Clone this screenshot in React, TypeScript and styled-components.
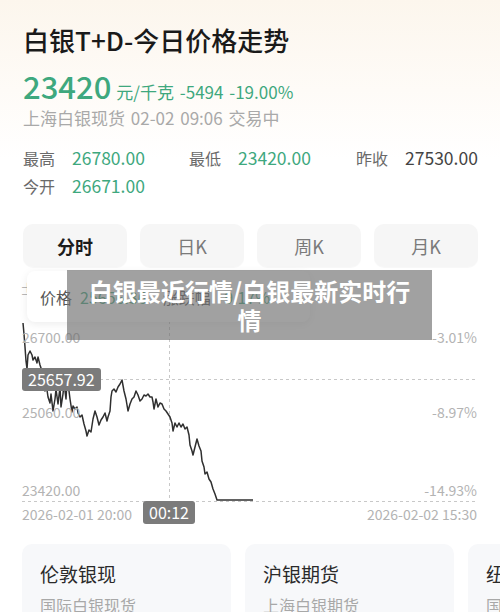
import styled, { createGlobalStyle } from "styled-components";

const GlobalStyle = createGlobalStyle`
  html, body {
    margin: 0;
    padding: 0;
    background: #ffffff;
  }
  body {
    font-family: "Noto Sans CJK SC", "Noto Sans", sans-serif;
    color: #1f1f1f;
    width: 500px;
    overflow: hidden;
  }
`;

const GREEN = "#3ea87e";

const Page = styled.div`
  position: relative;
  width: 500px;
  height: 612px;
  overflow: hidden;
  background: linear-gradient(180deg, #fcf6ed 0px, #fefbf7 90px, #ffffff 160px);
`;

const Header = styled.div`
  padding: 22px 23px 0 23px;
`;

const Title = styled.h1`
  margin: 0;
  font-size: 26px;
  line-height: 36px;
  font-weight: 500;
  color: #1a1a1a;
`;

const PriceRow = styled.div`
  display: flex;
  align-items: baseline;
  gap: 5px;
  margin-top: 8px;
  height: 40px;
  color: ${GREEN};
`;

const BigPrice = styled.span`
  font-size: 31px;
  line-height: 40px;
  font-weight: 500;
`;

const PriceMeta = styled.span`
  font-size: 17px;
  line-height: 40px;
  word-spacing: 2px;
`;

const SubLine = styled.div`
  font-size: 17px;
  line-height: 24px;
  word-spacing: 2px;
  color: #a9a9a9;
`;

const Stats = styled.div`
  display: grid;
  grid-template-columns: 166px 167px auto;
  margin-top: 14px;
`;

const Stat = styled.div`
  display: flex;
  align-items: baseline;
  gap: 17px;
  line-height: 27px;
  white-space: nowrap;
`;

const StatLabel = styled.span`
  font-size: 16px;
  color: #6a6a6a;
`;

const StatValue = styled.span<{ $muted?: boolean }>`
  font-size: 17.5px;
  color: ${(p) => (p.$muted ? "#444444" : GREEN)};
`;

const Tabs = styled.div`
  display: grid;
  grid-template-columns: repeat(4, 1fr);
  gap: 13px;
  padding: 0 22px 0 23px;
  margin-top: 24px;
`;

const Tab = styled.div<{ $active?: boolean }>`
  height: 43px;
  display: flex;
  align-items: center;
  justify-content: center;
  border-radius: 10px;
  background: #f6f6f6;
  box-shadow: 0 1px 1px rgba(0, 0, 0, 0.03);
  font-size: 18px;
  font-weight: ${(p) => (p.$active ? 700 : 400)};
  color: ${(p) => (p.$active ? "#1c1c1c" : "#7a7a7a")};
`;

const Chart = styled.div`
  position: relative;
  height: 270px;
`;

const ChartSvg = styled.svg`
  display: block;
  width: 500px;
  height: 270px;
`;

const AxisLabel = styled.span<{ $top: number; $right?: boolean }>`
  position: absolute;
  top: ${(p) => p.$top}px;
  ${(p) => (p.$right ? "right: 23px;" : "left: 22px;")}
  font-size: 14px;
  line-height: 18px;
  color: #b3b3b3;
  white-space: nowrap;
`;

const Marker = styled.span<{ $top: number; $left: number }>`
  position: absolute;
  top: ${(p) => p.$top}px;
  left: ${(p) => p.$left}px;
  padding: 0 6px;
  height: 23px;
  line-height: 23px;
  border-radius: 3px;
  background: #7b7b7b;
  color: #ffffff;
  font-size: 16px;
  white-space: nowrap;
`;

const Glyph = styled.span`
  position: absolute;
  top: 11px;
  left: 20px;
  font-size: 15px;
  color: #b8b8b8;
`;

const TooltipCard = styled.div`
  position: absolute;
  top: 4px;
  left: 27px;
  width: 283px;
  height: 51px;
  display: flex;
  align-items: center;
  gap: 16px;
  padding: 0 13px;
  box-sizing: border-box;
  background: #ffffff;
  border-radius: 8px;
  box-shadow: 0 2px 8px rgba(0, 0, 0, 0.08);
  font-size: 16px;
`;

const TipItem = styled.span`
  display: flex;
  gap: 8px;
  color: #555555;
`;

const TipValue = styled.span`
  color: ${GREEN};
`;

const Banner = styled.div`
  position: absolute;
  top: 270px;
  left: 67px;
  width: 365px;
  height: 70px;
  padding: 0 12px;
  box-sizing: border-box;
  display: flex;
  align-items: center;
  justify-content: center;
  text-align: center;
  background: rgba(112, 112, 112, 0.66);
  color: #ffffff;
  font-size: 24px;
  line-height: 29px;
  font-weight: 700;
`;

const Cards = styled.div`
  display: flex;
  gap: 14px;
  padding-left: 22px;
  margin-top: 7px;
  overflow: hidden;
`;

const Card = styled.div`
  flex: 0 0 209px;
  height: 90px;
  box-sizing: border-box;
  padding: 16px 18px;
  border-radius: 10px;
  background: #f7f8fa;
`;

const CardTitle = styled.div`
  font-size: 19px;
  line-height: 28px;
  color: #2a2a2a;
`;

const CardSub = styled.div`
  margin-top: 5px;
  font-size: 16px;
  line-height: 24px;
  color: #a8a8a8;
`;

// price line, page coordinates (svg viewBox starts at y=268)
const points: [number, number][] = [
  [23, 324], [24, 335], [25, 348], [26, 362], [27, 370], [28, 356], [30, 352], [32, 356],
  [33, 361], [35, 358], [37, 364], [38, 358], [40, 366], [42, 372], [43, 385], [45, 392],
  [46, 384], [48, 398], [50, 404], [51, 395], [53, 412], [55, 400], [56, 390], [58, 405],
  [60, 388], [61, 408], [63, 395], [64, 384], [66, 400], [67, 383], [69, 392], [70, 400],
  [72, 413], [73, 407], [75, 410], [77, 408], [78, 414], [80, 418], [82, 416], [84, 425],
  [86, 432], [87, 437], [89, 431], [91, 433], [93, 420], [95, 412], [97, 418], [99, 426],
  [101, 421], [103, 418], [105, 414], [107, 422], [108, 418], [110, 412], [111, 398],
  [112, 392], [114, 390], [116, 393], [118, 388], [120, 385], [122, 381], [124, 392],
  [126, 400], [128, 412], [130, 405], [132, 400], [134, 398], [136, 392], [138, 396],
  [140, 402], [142, 400], [144, 396], [146, 397], [148, 395], [150, 398], [152, 398],
  [153, 403], [154, 410], [156, 400], [158, 408], [160, 404], [162, 405], [164, 410],
  [166, 412], [168, 415], [170, 418], [172, 424], [173, 432], [175, 424], [177, 428],
  [179, 424], [181, 428], [183, 425], [185, 430], [187, 428], [189, 436], [190, 446],
  [192, 452], [193, 456], [195, 448], [197, 440], [199, 447], [201, 452], [202, 462],
  [204, 468], [205, 475], [207, 473], [209, 480], [211, 483], [213, 490], [215, 495],
  [217, 501], [253, 501],
];

const stats = [
  { label: "最高", value: "26780.00" },
  { label: "最低", value: "23420.00" },
  { label: "昨收", value: "27530.00", muted: true },
  { label: "今开", value: "26671.00" },
];

const tabs = ["分时", "日K", "周K", "月K"];

const cards = [
  { title: "伦敦银现", sub: "国际白银现货" },
  { title: "沪银期货", sub: "上海白银期货" },
  { title: "纽约银期", sub: "国际白银期货" },
];

export default function App() {
  const line = points.map(([x, y]) => `${x},${y}`).join(" ");
  return (
    <>
      <GlobalStyle />
      <Page>
        <Header>
          <Title>白银T+D-今日价格走势</Title>
          <PriceRow>
            <BigPrice>23420</BigPrice>
            <PriceMeta>元/千克 -5494 -19.00%</PriceMeta>
          </PriceRow>
          <SubLine>上海白银现货 02-02 09:06 交易中</SubLine>
          <Stats>
            {stats.map((s) => (
              <Stat key={s.label}>
                <StatLabel>{s.label}</StatLabel>
                <StatValue $muted={s.muted}>{s.value}</StatValue>
              </Stat>
            ))}
          </Stats>
        </Header>

        <Tabs>
          {tabs.map((t, i) => (
            <Tab key={t} $active={i === 0}>
              {t}
            </Tab>
          ))}
        </Tabs>

        <Chart>
          <ChartSvg viewBox="0 268 500 270">
            <g stroke="#c8c8c8" strokeWidth="1" strokeDasharray="3 3" fill="none">
              <line x1="22" y1="380.5" x2="478" y2="380.5" />
              <line x1="22" y1="502.5" x2="478" y2="502.5" />
              <line x1="169.5" y1="322" x2="169.5" y2="502" />
            </g>
            <polyline
              points={line}
              fill="none"
              stroke="#2f2f2f"
              strokeWidth="1.5"
              strokeLinejoin="round"
            />
          </ChartSvg>

          <Glyph>±</Glyph>
          <TooltipCard>
            <TipItem>
              价格<TipValue>25656.36</TipValue>
            </TipItem>
            <TipItem>
              涨跌幅<TipValue>-9.17%</TipValue>
            </TipItem>
          </TooltipCard>

          <AxisLabel $top={61}>26700.00</AxisLabel>
          <AxisLabel $top={136}>25060.00</AxisLabel>
          <AxisLabel $top={214}>23420.00</AxisLabel>
          <AxisLabel $top={61} $right>-3.01%</AxisLabel>
          <AxisLabel $top={136} $right>-8.97%</AxisLabel>
          <AxisLabel $top={214} $right>-14.93%</AxisLabel>
          <AxisLabel $top={238}>2026-02-01 20:00</AxisLabel>
          <AxisLabel $top={238} $right>2026-02-02 15:30</AxisLabel>

          <Marker $top={101} $left={22}>25657.92</Marker>
          <Marker $top={234} $left={143}>00:12</Marker>
        </Chart>

        <Cards>
          {cards.map((c) => (
            <Card key={c.title}>
              <CardTitle>{c.title}</CardTitle>
              <CardSub>{c.sub}</CardSub>
            </Card>
          ))}
        </Cards>

        <Banner>白银最近行情/白银最新实时行情</Banner>
      </Page>
    </>
  );
}
